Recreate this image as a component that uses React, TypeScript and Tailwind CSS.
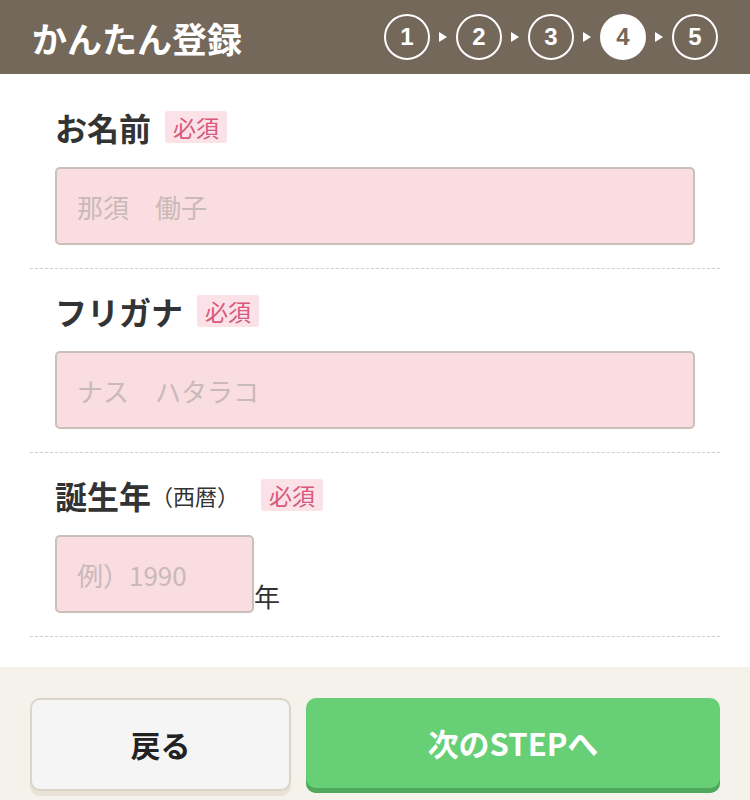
import React from 'react';

const FONT = { fontFamily: '"Noto Sans CJK JP", "Noto Sans", sans-serif' };

const steps = [1, 2, 3, 4, 5];
const CURRENT = 4;

const Required = () => (
  <span className="ml-[14px] inline-block rounded-[3px] bg-[#fbe2e8] px-[8px] text-[23px] leading-[32px] text-[#d6587c]">
    必須
  </span>
);

type FieldProps = {
  label: React.ReactNode;
  first?: boolean;
  children: React.ReactNode;
};

const Field = ({ label, first, children }: FieldProps) => (
  <div className={`border-b border-dashed border-[#cfcfcf] pb-[23px] ${first ? 'pt-[35px]' : 'pt-[24px]'}`}>
    <div className="flex h-[36px] items-center px-[25px]">{label}</div>
    <div className="mt-[22px] px-[25px]">{children}</div>
  </div>
);

const TextInput = ({ placeholder, className = '' }: { placeholder: string; className?: string }) => (
  <input
    type="text"
    placeholder={placeholder}
    className={`h-[78px] rounded-[5px] border-2 border-[#cbbfba] bg-[#fadde0] px-[20px] text-[26px] text-[#333] outline-none placeholder:text-[#c9b9b9] ${className}`}
    style={FONT}
  />
);

export default function App() {
  return (
    <div className="w-[750px] min-h-[800px] bg-white" style={FONT}>
      <header className="flex h-[74px] items-center justify-between bg-[#74685b] pl-[32px] pr-[32px]">
        <h1 className="text-[35px] font-bold leading-none text-white">かんたん登録</h1>
        <div className="flex items-center">
          {steps.map((n, i) => (
            <React.Fragment key={n}>
              {i > 0 && (
                <span className="mx-[9px] h-0 w-0 border-y-[5px] border-l-[8px] border-y-transparent border-l-white" />
              )}
              <span
                className={`flex h-[46px] w-[46px] items-center justify-center rounded-full border-2 border-white text-[24px] font-bold ${
                  n === CURRENT ? 'bg-white text-[#74685b]' : 'text-white'
                }`}
                style={{ fontFamily: '"Liberation Sans", Arial, sans-serif' }}
              >
                {n}
              </span>
            </React.Fragment>
          ))}
        </div>
      </header>

      <main className="px-[30px] pb-[30px]">
        <Field
          first
          label={
            <>
              <span className="text-[32px] font-bold text-[#333]">お名前</span>
              <Required />
            </>
          }
        >
          <TextInput placeholder="那須　働子" className="w-full" />
        </Field>

        <Field
          label={
            <>
              <span className="text-[32px] font-bold text-[#333]">フリガナ</span>
              <Required />
            </>
          }
        >
          <TextInput placeholder="ナス　ハタラコ" className="w-full" />
        </Field>

        <Field
          label={
            <>
              <span className="text-[32px] font-bold text-[#333]">誕生年</span>
              <span className="text-[22px] text-[#333]">（西暦）</span>
              <span className="ml-[8px] inline-flex">
                <Required />
              </span>
            </>
          }
        >
          <div className="flex items-end">
            <TextInput placeholder="例）1990" className="w-[199px]" />
            <span className="mb-[4px] text-[26px] leading-none text-[#333]">年</span>
          </div>
        </Field>
      </main>

      <footer className="flex gap-[15px] bg-[#f5f2ec] px-[30px] pb-[10px] pt-[31px]">
        <button
          type="button"
          className="h-[93px] w-[261px] rounded-[10px] border-2 border-[#ddd4c8] bg-[#f5f5f5] text-[30px] font-bold text-[#222] shadow-[0_5px_0_#e9e2d7]"
          style={FONT}
        >
          戻る
        </button>
        <button
          type="button"
          className="h-[95px] flex-1 rounded-[10px] bg-[#67cf76] pb-[5px] text-[31px] font-bold text-white shadow-[inset_0_-5px_0_#4fa95c]"
          style={FONT}
        >
          次のSTEPへ
        </button>
      </footer>
    </div>
  );
}
